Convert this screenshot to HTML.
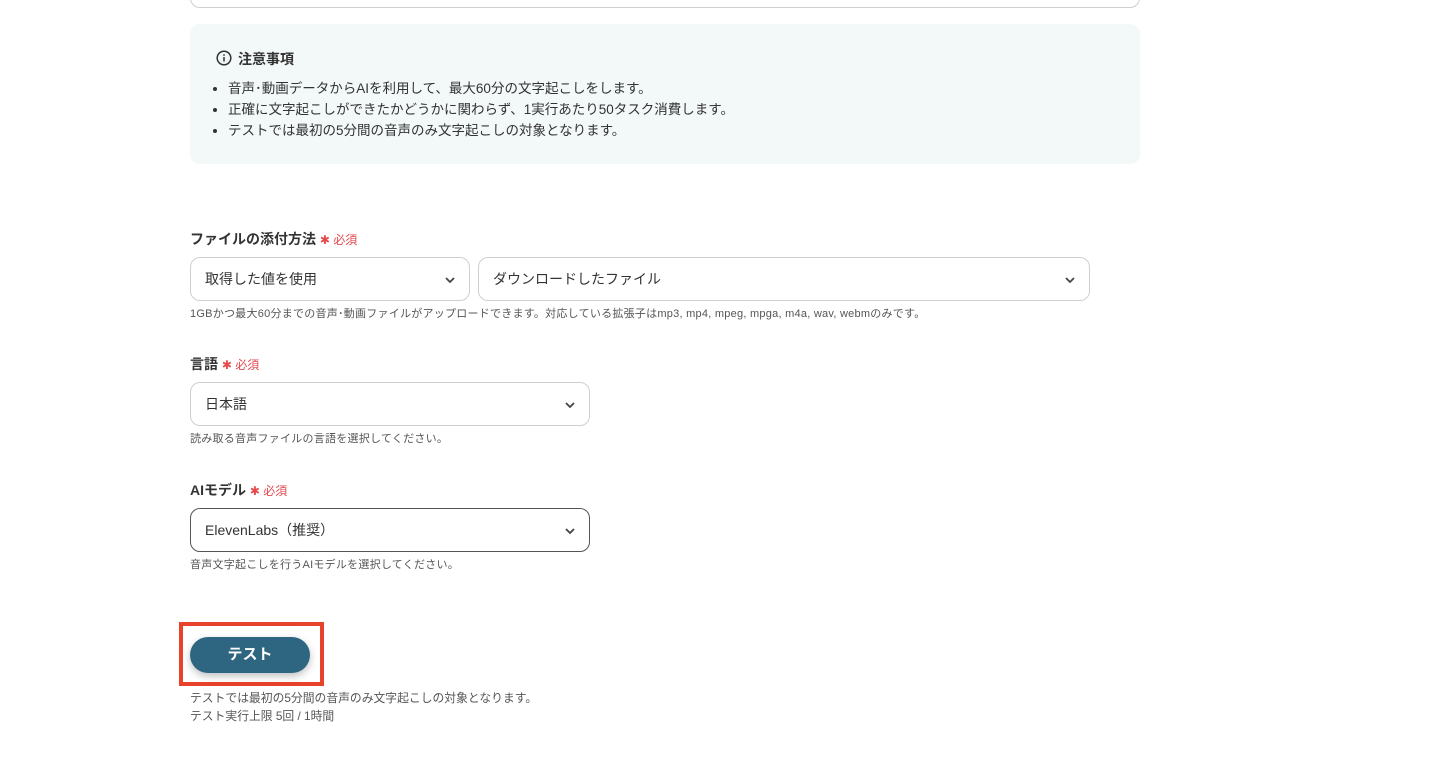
<!DOCTYPE html>
<html><head><meta charset="utf-8"><style>
*{box-sizing:border-box;margin:0;padding:0}
body{width:1446px;height:774px;background:#fff;font-family:"Liberation Sans","Noto Sans CJK JP",sans-serif;color:#333;position:relative;overflow:hidden}
.a{position:absolute}
.top{left:190px;top:-30px;width:950px;height:38px;border:1px solid #ccd0d5;border-radius:10px}
.note{left:190px;top:24px;width:950px;height:140px;background:#f3f8f8;border-radius:10px}
.note h4{position:absolute;left:48px;top:25px;font-size:14px;font-weight:bold;color:#333}
.note ul{position:absolute;left:38px;top:54px;font-size:13.5px;line-height:21px;list-style:disc;padding-left:0}
.lbl{font-size:14px;font-weight:bold;color:#333}
.req{color:#e5484d;font-size:12px;font-weight:normal}
.sel{border:1px solid #ccd0d5;border-radius:10px;height:44px;font-size:14px;line-height:42px;padding-left:14px;color:#333}
.sel svg{position:absolute;right:12px;top:15px}
.help{font-size:11px;color:#555;letter-spacing:0.25px}
.btn{left:190px;top:637px;width:120px;height:36px;background:#2e6580;border-radius:18px;color:#fff;font-weight:bold;font-size:15px;text-align:center;line-height:36px;box-shadow:0 3px 8px rgba(0,0,0,.25)}
.red{left:179px;top:622px;width:145px;height:64px;border:4px solid #e8432a}
</style></head><body>
<div class="a top"></div>
<div class="a note">
<svg class="a" style="left:26px;top:26px" width="16" height="16" viewBox="0 0 16 16"><circle cx="8" cy="8" r="6.8" fill="none" stroke="#333" stroke-width="1.5"/><rect x="7.25" y="7" width="1.5" height="4.5" fill="#333"/><circle cx="8" cy="5" r="0.9" fill="#333"/></svg>
<h4>注意事項</h4>
<ul><li>音声･動画データからAIを利用して、最大60分の文字起こしをします。</li><li>正確に文字起こしができたかどうかに関わらず、1実行あたり50タスク消費します。</li><li>テストでは最初の5分間の音声のみ文字起こしの対象となります。</li></ul>
</div>

<div class="a lbl" style="left:190px;top:229px">ファイルの添付方法 <span class="req">✱ 必須</span></div>
<div class="a sel" style="left:190px;top:257px;width:280px">取得した値を使用<svg width="14" height="14" viewBox="0 0 14 14"><path d="M3 5l4 4 4-4" fill="none" stroke="#444" stroke-width="1.8"/></svg></div>
<div class="a sel" style="left:478px;top:257px;width:612px">ダウンロードしたファイル<svg width="14" height="14" viewBox="0 0 14 14"><path d="M3 5l4 4 4-4" fill="none" stroke="#444" stroke-width="1.8"/></svg></div>
<div class="a help" style="left:190px;top:305px">1GBかつ最大60分までの音声･動画ファイルがアップロードできます。対応している拡張子はmp3, mp4, mpeg, mpga, m4a, wav, webmのみです。</div>

<div class="a lbl" style="left:190px;top:354px">言語 <span class="req">✱ 必須</span></div>
<div class="a sel" style="left:190px;top:382px;width:400px">日本語<svg width="14" height="14" viewBox="0 0 14 14"><path d="M3 5l4 4 4-4" fill="none" stroke="#444" stroke-width="1.8"/></svg></div>
<div class="a help" style="left:190px;top:430px">読み取る音声ファイルの言語を選択してください。</div>

<div class="a lbl" style="left:190px;top:480px">AIモデル <span class="req">✱ 必須</span></div>
<div class="a sel" style="left:190px;top:508px;width:400px;border-color:#555">ElevenLabs（推奨）<svg width="14" height="14" viewBox="0 0 14 14"><path d="M3 5l4 4 4-4" fill="none" stroke="#444" stroke-width="1.8"/></svg></div>
<div class="a help" style="left:190px;top:556px">音声文字起こしを行うAIモデルを選択してください。</div>

<div class="a red"></div>
<div class="a btn">テスト</div>
<div class="a help" style="left:190px;top:689px;font-size:11.8px;line-height:18px;letter-spacing:0">テストでは最初の5分間の音声のみ文字起こしの対象となります。<br>テスト実行上限 5回 / 1時間</div>
</body></html>
